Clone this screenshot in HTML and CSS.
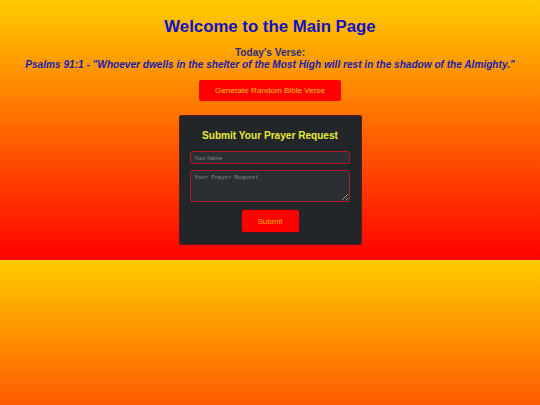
FILE: index.html
```html
<!DOCTYPE html>
<html lang="en">
<head>
<meta charset="utf-8">
<title>Main Page</title>
<link rel="stylesheet" href="styles.css">
</head>
<body>
  <h1 class="title">Welcome to the Main Page</h1>
  <div class="verse-block">
    <h3 class="verse-label">Today's Verse:</h3>
    <p class="verse-text">Psalms 91:1 - "Whoever dwells in the shelter of the Most High will rest in the shadow of the Almighty."</p>
  </div>
  <button class="btn btn-generate" type="button">Generate Random Bible Verse</button>
  <form class="prayer-card">
    <h3 class="card-title">Submit Your Prayer Request</h3>
    <input class="field field-name" type="text" placeholder="Your Name">
    <textarea class="field field-request" placeholder="Your Prayer Request"></textarea>
    <button class="btn btn-submit" type="button">Submit</button>
  </form>
</body>
</html>
```

FILE: styles.css
```css
html {
  margin: 0;
}

body {
  margin: 0;
  padding: 16.5px 0 14.5px;
  font-family: "Liberation Sans", Arial, sans-serif;
  text-align: center;
  background: linear-gradient(to bottom, #ffcc00, #ff0000);
  display: flex;
  flex-direction: column;
  align-items: center;
}

.title {
  margin: 0;
  font-size: 16.8px;
  line-height: 20px;
  font-weight: bold;
  color: #1010c8;
}

.verse-block {
  margin-top: 10px;
}

.verse-label {
  margin: 0;
  font-size: 10.1px;
  line-height: 12px;
  font-weight: bold;
  color: #2e2b80;
}

.verse-text {
  margin: 0.4px 0 0;
  font-size: 10.1px;
  line-height: 12px;
  font-weight: bold;
  font-style: italic;
  color: #2020b0;
  white-space: nowrap;
}

.btn {
  font-family: "Liberation Sans", Arial, sans-serif;
  font-size: 8.1px;
  color: #ffb000;
  background: #ff0000;
  border: none;
  border-radius: 2.5px;
  cursor: pointer;
}

.btn-generate {
  margin-top: 9.1px;
  width: 142px;
  height: 21px;
  padding: 0;
  color: #ffc21a;
}

.prayer-card {
  margin-top: 14px;
  width: 183px;
  box-sizing: border-box;
  padding: 10.8px 10.8px 12.2px;
  background: #232629;
  border: 1px solid #5e1a1a;
  border-radius: 2px;
  display: flex;
  flex-direction: column;
  align-items: center;
}

.card-title {
  margin: 3.7px 0 0;
  font-size: 10.1px;
  line-height: 12px;
  font-weight: bold;
  color: #eaea3c;
}

.field {
  width: 100%;
  box-sizing: border-box;
  background: #2b2f34;
  border: 1px solid #b01c22;
  border-radius: 2.5px;
  padding: 2px 3px;
  color: #ddd;
  outline: none;
}

.field::placeholder {
  color: #858a8f;
}

.field-name {
  margin-top: 8.5px;
  height: 13.3px;
  font-family: "Liberation Sans", Arial, sans-serif;
  font-size: 5.6px;
}

.field-request {
  margin-top: 6px;
  height: 32px;
  padding-top: 3px;
  resize: vertical;
  font-family: "DejaVu Sans Mono", monospace;
  font-size: 5.6px;
  display: block;
}

.btn-submit {
  margin-top: 8px;
  width: 57px;
  height: 22px;
  padding: 0;
  box-shadow: 0 0 0 0.5px rgba(160, 0, 0, 0.6);
}
```
